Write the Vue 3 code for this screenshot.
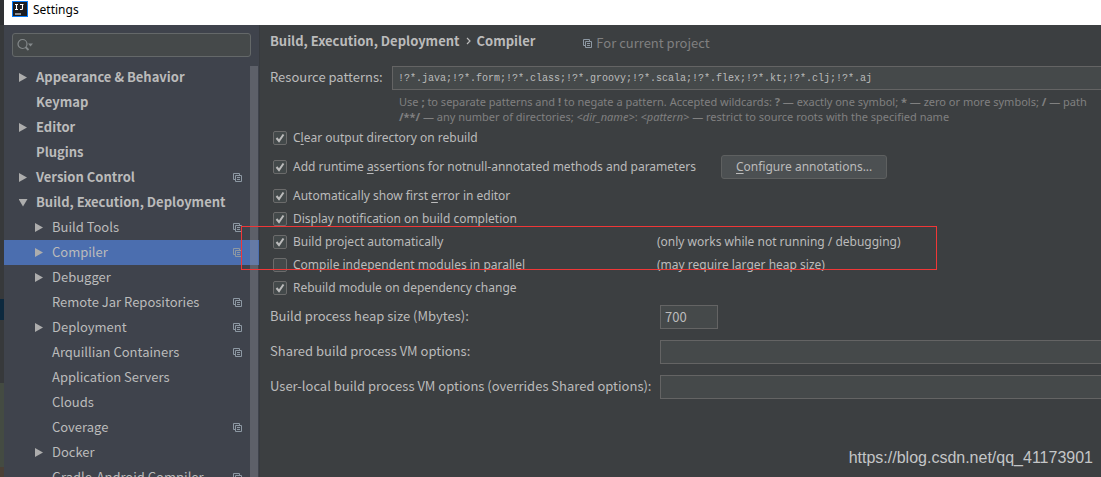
<script setup>
import { ref } from 'vue'

const tree = [
  { name: 'Appearance & Behavior', arrow: 'right' },
  { name: 'Keymap' },
  { name: 'Editor', arrow: 'right' },
  { name: 'Plugins' },
  { name: 'Version Control', arrow: 'right', project: true },
  { name: 'Build, Execution, Deployment', arrow: 'down' },
  { name: 'Build Tools', arrow: 'right', project: true, child: true },
  { name: 'Compiler', arrow: 'right', project: true, child: true, selected: true },
  { name: 'Debugger', arrow: 'right', child: true },
  { name: 'Remote Jar Repositories', project: true, child: true },
  { name: 'Deployment', arrow: 'right', project: true, child: true },
  { name: 'Arquillian Containers', project: true, child: true },
  { name: 'Application Servers', child: true },
  { name: 'Clouds', child: true },
  { name: 'Coverage', project: true, child: true },
  { name: 'Docker', arrow: 'right', child: true },
  { name: 'Gradle-Android Compiler', project: true, child: true },
]

const patterns = ref('!?*.java;!?*.form;!?*.class;!?*.groovy;!?*.scala;!?*.flex;!?*.kt;!?*.clj;!?*.aj')
const heap = ref('700')
const shared = ref('')
const local = ref('')
const search = ref('')

// Each label is split round its underlined mnemonic letter.
const options = ref([
  { id: 'clear', pre: 'C', key: 'l', post: 'ear output directory on rebuild', on: true },
  { id: 'assert', pre: 'Add runtime ', key: 'a', post: 'ssertions for notnull-annotated methods and parameters', on: true, button: true },
  { id: 'first', pre: 'Automatically show first ', key: 'e', post: 'rror in editor', on: true },
  { id: 'notify', pre: 'Display notification on build completion', on: true },
  { id: 'auto', pre: 'Build project automatically', on: true, note: '(only works while not running / debugging)' },
  { id: 'parallel', pre: 'Compile independent modules in parallel', on: false, note: '(may require larger heap size)' },
  { id: 'rebuild', pre: 'Rebuild module on dependency change', on: true },
])
</script>

<template>
  <div class="screen">
    <div class="backdrop">
      <i class="b1"></i><i class="b2"></i><i class="b3"></i><i class="b4"></i><i class="b5"></i><i class="b6"></i>
    </div>
    <div class="dialog">
      <header class="titlebar">
        <svg class="logo" width="16" height="16" viewBox="0 0 16 16">
          <rect width="16" height="16" fill="#087cfa" />
          <rect x="1" y="1" width="14" height="14" fill="#1b1b1f" />
          <path d="M3 3.500h3M4.500 3.500v5M3 8.500h3M8 3.500h3.500M10.500 3.500v4q0 1-1 1H8M3 13h6" fill="none" stroke="#fff" stroke-width="1.1" />
        </svg>
        <span>Settings</span>
      </header>
      <div class="content">
        <aside class="sidebar">
          <label class="search">
            <svg width="18" height="14" viewBox="0 0 18 14">
              <circle cx="5.500" cy="6" r="4.500" fill="none" stroke="#84898b" stroke-width="1.2" />
              <path d="M8.500 9l3 3" stroke="#84898b" stroke-width="1.8" />
              <path d="M11 5.500h5L13.500 8.500z" fill="#84898b" />
            </svg>
            <input v-model="search" type="text" aria-label="Search settings" />
          </label>
          <div class="treebox">
            <ul class="tree">
              <li v-for="n in tree" :key="n.name" :class="{ child: n.child, selected: n.selected }">
                <svg class="arrow" width="9" height="9" viewBox="0 0 9 9">
                  <path v-if="n.arrow === 'right'" d="M0 0L8 4.500 0 9z" fill="#adadad" />
                  <path v-if="n.arrow === 'down'" d="M-.5 1h9L4 8.500z" fill="#adadad" />
                </svg>
                <span class="name">{{ n.name }}</span>
                <svg v-if="n.project" class="project" width="9" height="9" viewBox="0 0 9 9">
                  <path d="M2 6.500H.5V.5h6V2M2.500 2.500h6v6h-6zM4 4.500h3M4 6.500h3" fill="none" stroke="#8d98a3" />
                </svg>
              </li>
            </ul>
            <div class="scrollbar"></div>
          </div>
        </aside>
        <main class="main">
          <div class="crumbs">
            <strong>Build, Execution, Deployment</strong>
            <svg width="5" height="8" viewBox="0 0 5 8"><path d="M1 1l3 3-3 3" fill="none" stroke="#bbb" stroke-width="1.2" /></svg>
            <strong>Compiler</strong>
            <span class="scope">
              <svg width="9" height="9" viewBox="0 0 9 9">
                <path d="M2 6.500H.5V.5h6V2M2.500 2.500h6v6h-6zM4 4.500h3M4 6.500h3" fill="none" stroke="#8d98a3" />
              </svg>
              <span>For current project</span>
            </span>
          </div>
          <div class="patterns">
            <label for="patterns">Resource patterns:</label>
            <input id="patterns" v-model="patterns" class="field mono" type="text" />
            <p class="hint">
              Use <b>;</b> to separate patterns and <b>!</b> to negate a pattern. Accepted wildcards: <b>?</b> — exactly one symbol; <b>*</b> — zero or more symbols; <b>/</b> — path<br />
              <b>/**/</b> — any number of directories; <em>&lt;dir_name&gt;</em>: <em>&lt;pattern&gt;</em> — restrict to source roots with the specified name
            </p>
          </div>
          <div class="options">
            <div v-for="o in options" :key="o.id" class="option" :class="{ tall: o.button }">
              <label :for="o.id" class="check">
                <input :id="o.id" v-model="o.on" type="checkbox" />
                <svg class="tick" width="14" height="14" viewBox="0 0 14 14">
                  <path d="M3.500 7l2.500 3L10.500 3.500" fill="none" stroke="#bbb" stroke-width="2" />
                </svg>
                <span>{{ o.pre }}<u v-if="o.key">{{ o.key }}</u>{{ o.post }}</span>
              </label>
              <button v-if="o.button" type="button"><u>C</u>onfigure annotations...</button>
              <span v-if="o.note" class="note">{{ o.note }}</span>
            </div>
          </div>
          <div class="form">
            <label for="heap">Build process heap size (Mbytes):</label>
            <input id="heap" v-model="heap" class="field small" type="text" />
            <label for="shared">Shared build process VM options:</label>
            <input id="shared" v-model="shared" class="field" type="text" />
            <label for="local">User-local build process VM options (overrides Shared options):</label>
            <input id="local" v-model="local" class="field" type="text" />
          </div>
        </main>
      </div>
    </div>
    <div class="marker"></div>
    <div class="watermark">https://blog.csdn.net/qq_41173901</div>
  </div>
</template>

<style>
body {
  margin: 0;
  background: #3c3f41;
}
</style>

<style scoped>
.screen {
  position: relative;
  display: flex;
  height: 100vh;
  overflow: hidden;
  color: #bbbbbb;
  font: 13px/20px "Noto Sans CJK SC", "Noto Sans", sans-serif;
  white-space: nowrap;
}
.screen * {
  box-sizing: border-box;
}
.backdrop {
  width: 4px;
  flex: none;
  display: flex;
  flex-direction: column;
}
.b1 { height: 25px; background: #2f3133; }
.b2 { height: 274px; background: #37393b; }
.b3 { height: 21px; background: #0d293e; }
.b4 { height: 63px; background: #37393b; }
.b5 { flex: 1; background: #444b42; }
.b6 { height: 10px; background: #4b4036; }
.dialog {
  flex: 1;
  min-width: 0;
  display: flex;
  flex-direction: column;
}
.titlebar {
  flex: none;
  height: 25px;
  padding: 1px 8px 0;
  display: flex;
  gap: 5px;
  background: #fff;
  color: #000;
  font: 12px/17px "Noto Sans", sans-serif;
}
.content {
  flex: 1;
  min-height: 0;
  display: flex;
}
.sidebar {
  flex: none;
  width: 256px;
  padding-top: 8px;
  display: flex;
  flex-direction: column;
  background: #3f434c;
  border-right: 1px solid #373a3e;
}
.search {
  flex: none;
  height: 24px;
  margin: 0 8px 8px;
  padding: 0 4px;
  display: flex;
  align-items: center;
  background: #45494a;
  border: 1px solid #646869;
  border-radius: 3px;
}
.search input {
  flex: 1;
  min-width: 0;
  border: 0;
  padding: 0;
  background: none;
  color: inherit;
  outline: 0;
}
.treebox {
  position: relative;
  flex: 1;
  min-height: 0;
  overflow: hidden;
}
.tree {
  list-style: none;
  margin: 0;
  padding: 0;
}
.tree li {
  height: 25px;
  padding: 0 17px 0 15px;
  display: flex;
  align-items: center;
  gap: 8px;
  font-weight: 700;
}
.tree li.child {
  padding-left: 31px;
  font-weight: 400;
}
.tree li.selected {
  background: #4b6eaf;
}
.name {
  flex: 1;
  padding-bottom: 2px;
}
.arrow,
.project {
  flex: none;
}
.scrollbar {
  position: absolute;
  top: 1px;
  right: 1px;
  bottom: 0;
  width: 8px;
  background: rgba(140, 140, 150, 0.4);
}
.main {
  flex: 1;
  min-width: 0;
  padding: 6px 0 0 10px;
  background: #3c3f41;
}
.crumbs {
  height: 20px;
  display: flex;
  align-items: center;
  gap: 6px;
}
.scope {
  margin-left: 42px;
  padding-top: 4px;
  display: flex;
  align-items: center;
  gap: 4px;
  color: #808080;
}
.patterns {
  margin-top: 15px;
  display: grid;
  grid-template-columns: 122px 1fr;
  align-items: center;
}
.patterns label,
.form label {
  padding-bottom: 2px;
}
.field {
  width: 100%;
  min-width: 0;
  height: 24px;
  padding: 0 4px;
  background: #45494a;
  border: 1px solid #646464;
  border-right: 0;
  border-radius: 0;
  color: #bbbbbb;
  font: inherit;
  outline: 0;
}
.field.mono {
  padding: 0 5px;
  font-family: "Liberation Mono", monospace;
  font-size: 10px;
}
.field.small {
  width: 58px;
  padding-bottom: 2px;
  border-right: 1px solid #646464;
}
.hint {
  grid-column: 2;
  margin: 4px 0 0;
  padding-left: 7px;
  overflow: hidden;
  color: #808080;
  font: 11px/15px "Noto Sans", sans-serif;
}
.options {
  margin-top: 2px;
  font: 12px/20px "Noto Sans", sans-serif;
}
.option {
  height: 23px;
  display: flex;
  align-items: center;
}
.option.tall {
  height: 24px;
  margin: 6px 0 5px;
}
.check {
  display: grid;
  grid-template-columns: 14px auto;
  justify-content: start;
  column-gap: 6px;
  align-items: center;
  padding-left: 3px;
  min-width: 387px;
}
.tall .check {
  min-width: 426px;
}
.check input {
  appearance: none;
  grid-area: 1 / 1;
  width: 14px;
  height: 14px;
  margin: 0;
  background: #43494a;
  border: 1px solid #6b6b6b;
  border-radius: 2px;
}
.tick {
  grid-area: 1 / 1;
  visibility: hidden;
  pointer-events: none;
}
.check input:checked + .tick {
  visibility: visible;
}
u {
  text-underline-offset: 2px;
}
.option button {
  height: 24px;
  margin-left: 25px;
  padding: 0 14px;
  background: #4c5052;
  border: 1px solid #5e6060;
  border-radius: 3px;
  color: inherit;
  font: inherit;
}
.form {
  margin-top: 6px;
  display: grid;
  grid-template-columns: 390px 1fr;
  row-gap: 11px;
  align-items: center;
}
.marker {
  position: absolute;
  left: 241px;
  top: 226px;
  width: 696px;
  height: 44px;
  border: 1px solid #f03737;
  pointer-events: none;
}
.watermark {
  position: absolute;
  right: 8px;
  bottom: 9px;
  color: #c4c6c7;
  font: 16px/20px "Liberation Sans", Arial, sans-serif;
}
</style>
